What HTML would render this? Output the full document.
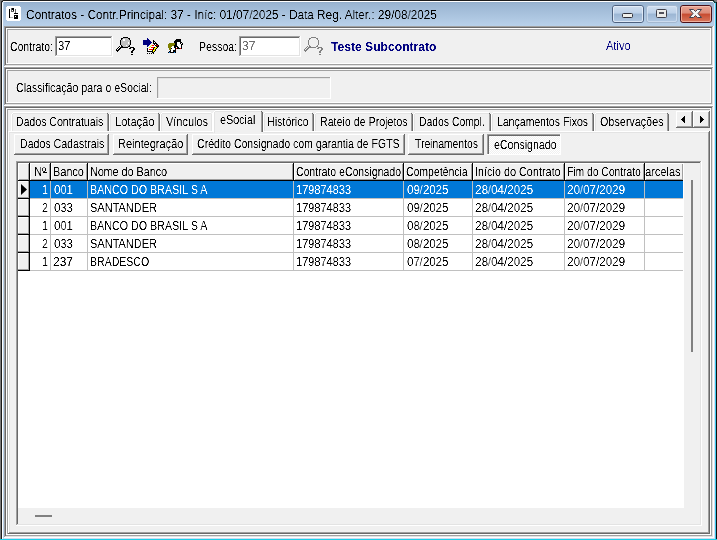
<!DOCTYPE html>
<html><head><meta charset="utf-8"><style>
html,body{margin:0;padding:0;width:717px;height:540px;overflow:hidden;background:#f0f0f0}
div{position:absolute}
.t{font-family:"Liberation Sans", sans-serif;white-space:nowrap;will-change:transform;filter:url(#crisp)}
</style></head><body>
<svg width="0" height="0" style="position:absolute"><filter id="crisp" x="-5%" y="-60%" width="110%" height="220%"><feComponentTransfer><feFuncA type="linear" slope="2.5" intercept="-0.7"/></feComponentTransfer></filter></svg>
<div style="left:0px;top:0px;width:717px;height:26px;background:linear-gradient(#99b4d1 0px, #99b4d1 3px, #b9d1ea 26px);"></div><div style="left:0px;top:0px;width:717px;height:1px;background:#1c1c1c;"></div><div style="left:2px;top:1px;width:712px;height:1px;background:#ffffff;"></div><div style="left:2px;top:2px;width:712px;height:1px;background:#93aecb;"></div><div style="left:0px;top:0px;width:1px;height:540px;background:#7a7a7a;"></div><div style="left:1px;top:1px;width:1px;height:539px;background:#1a1a1a;"></div><div style="left:2px;top:2px;width:1px;height:538px;background:#ffffff;"></div><div style="left:3px;top:2px;width:1px;height:538px;background:#b9d1ea;"></div><div style="left:714px;top:2px;width:1px;height:538px;background:#d6e0f2;"></div><div style="left:715px;top:1px;width:1px;height:539px;background:#3cc8ee;"></div><div style="left:716px;top:0px;width:1px;height:540px;background:#101010;"></div><div style="left:4px;top:538px;width:711px;height:1px;background:#d0daf0;"></div><div style="left:0px;top:539px;width:717px;height:1px;background:#1ad0e8;"></div><div style="left:0px;top:0px;width:1px;height:1px;background:#7a7a7a;"></div><div style="left:1px;top:0px;width:1px;height:1px;background:#7a7a7a;"></div><div style="left:2px;top:0px;width:1px;height:1px;background:#505050;"></div><div style="left:0px;top:1px;width:1px;height:1px;background:#7a7a7a;"></div><div style="left:1px;top:1px;width:1px;height:1px;background:#303030;"></div><div style="left:2px;top:1px;width:1px;height:1px;background:#1c1c1c;"></div><div style="left:1px;top:2px;width:1px;height:1px;background:#1c1c1c;"></div><div style="left:2px;top:2px;width:1px;height:1px;background:#d0d8e0;"></div><div style="left:714px;top:0px;width:1px;height:1px;background:#7a7a7a;"></div><div style="left:715px;top:0px;width:1px;height:1px;background:#7a7a7a;"></div><div style="left:716px;top:0px;width:1px;height:1px;background:#7a7a7a;"></div><div style="left:716px;top:1px;width:1px;height:1px;background:#7a7a7a;"></div><div style="left:713px;top:1px;width:1px;height:1px;background:#205050;"></div><div style="left:714px;top:1px;width:1px;height:1px;background:#205050;"></div><div style="left:715px;top:1px;width:1px;height:1px;background:#7a7a7a;"></div><div style="left:714px;top:2px;width:1px;height:1px;background:#103030;"></div><div style="left:715px;top:2px;width:1px;height:1px;background:#205050;"></div><div style="left:713px;top:2px;width:1px;height:1px;background:#c0f0f8;"></div><div style="left:4px;top:26px;width:710px;height:1px;background:#a0a0a0;"></div><div style="left:4px;top:26px;width:1px;height:41px;background:#a0a0a0;"></div><div style="left:4px;top:66px;width:710px;height:1px;background:#ffffff;"></div><div style="left:713px;top:26px;width:1px;height:41px;background:#ffffff;"></div><div style="left:5px;top:27px;width:708px;height:1px;background:#696969;"></div><div style="left:5px;top:27px;width:1px;height:39px;background:#696969;"></div><div style="left:5px;top:65px;width:708px;height:1px;background:#e3e3e3;"></div><div style="left:712px;top:27px;width:1px;height:39px;background:#e3e3e3;"></div><div style="left:6px;top:28px;width:706px;height:1px;background:#ffffff;"></div><div style="left:6px;top:28px;width:1px;height:37px;background:#ffffff;"></div><div style="left:6px;top:64px;width:706px;height:1px;background:#a0a0a0;"></div><div style="left:711px;top:28px;width:1px;height:37px;background:#a0a0a0;"></div><div style="left:7px;top:29px;width:704px;height:1px;background:#a0a0a0;"></div><div style="left:7px;top:29px;width:1px;height:35px;background:#a0a0a0;"></div><div style="left:7px;top:63px;width:704px;height:1px;background:#ffffff;"></div><div style="left:710px;top:29px;width:1px;height:35px;background:#ffffff;"></div><div style="left:4px;top:67px;width:710px;height:1px;background:#a0a0a0;"></div><div style="left:4px;top:67px;width:1px;height:39px;background:#a0a0a0;"></div><div style="left:4px;top:105px;width:710px;height:1px;background:#ffffff;"></div><div style="left:713px;top:67px;width:1px;height:39px;background:#ffffff;"></div><div style="left:5px;top:68px;width:708px;height:1px;background:#696969;"></div><div style="left:5px;top:68px;width:1px;height:37px;background:#696969;"></div><div style="left:5px;top:104px;width:708px;height:1px;background:#e3e3e3;"></div><div style="left:712px;top:68px;width:1px;height:37px;background:#e3e3e3;"></div><div style="left:6px;top:69px;width:706px;height:1px;background:#ffffff;"></div><div style="left:6px;top:69px;width:1px;height:35px;background:#ffffff;"></div><div style="left:6px;top:103px;width:706px;height:1px;background:#a0a0a0;"></div><div style="left:711px;top:69px;width:1px;height:35px;background:#a0a0a0;"></div><div style="left:7px;top:70px;width:704px;height:1px;background:#a0a0a0;"></div><div style="left:7px;top:70px;width:1px;height:33px;background:#a0a0a0;"></div><div style="left:7px;top:102px;width:704px;height:1px;background:#ffffff;"></div><div style="left:710px;top:70px;width:1px;height:33px;background:#ffffff;"></div><div style="left:4px;top:106px;width:710px;height:1px;background:#a0a0a0;"></div><div style="left:4px;top:106px;width:1px;height:432px;background:#a0a0a0;"></div><div style="left:4px;top:537px;width:710px;height:1px;background:#ffffff;"></div><div style="left:713px;top:106px;width:1px;height:432px;background:#ffffff;"></div><div style="left:5px;top:107px;width:708px;height:1px;background:#696969;"></div><div style="left:5px;top:107px;width:1px;height:430px;background:#696969;"></div><div style="left:5px;top:536px;width:708px;height:1px;background:#e3e3e3;"></div><div style="left:712px;top:107px;width:1px;height:430px;background:#e3e3e3;"></div><div style="left:6px;top:108px;width:706px;height:1px;background:#ffffff;"></div><div style="left:6px;top:108px;width:1px;height:428px;background:#ffffff;"></div><div style="left:6px;top:535px;width:706px;height:1px;background:#a0a0a0;"></div><div style="left:711px;top:108px;width:1px;height:428px;background:#a0a0a0;"></div><div style="left:7px;top:109px;width:704px;height:1px;background:#a0a0a0;"></div><div style="left:7px;top:109px;width:1px;height:426px;background:#a0a0a0;"></div><div style="left:7px;top:534px;width:704px;height:1px;background:#ffffff;"></div><div style="left:710px;top:109px;width:1px;height:426px;background:#ffffff;"></div><div class="t" style="left:26.02px;top:8.84px;font-size:12px;line-height:12px;color:#000;transform:scaleX(0.9808);transform-origin:0 0">Contratos - Contr.Principal: 37 - Iníc: 01/07/2025 - Data Reg. Alter.: 29/08/2025</div><div class="t" style="left:10.13px;top:40.84px;font-size:12px;line-height:12px;color:#000;transform:scaleX(0.8723);transform-origin:0 0">Contrato:</div><div class="t" style="left:199.12px;top:40.84px;font-size:12px;line-height:12px;color:#000;transform:scaleX(0.8780);transform-origin:0 0">Pessoa:</div><div class="t" style="left:331.00px;top:40.84px;font-size:12px;line-height:12px;color:#000080;font-weight:bold;transform:scaleX(1.0096);transform-origin:0 0">Teste Subcontrato</div><div class="t" style="left:606.00px;top:39.84px;font-size:12px;line-height:12px;color:#000080;transform:scaleX(0.9231);transform-origin:0 0">Ativo</div><div style="left:55px;top:36px;width:58px;height:21px;background:#ffffff;"></div><div style="left:55px;top:36px;width:58px;height:1px;background:#a0a0a0;"></div><div style="left:55px;top:36px;width:1px;height:21px;background:#a0a0a0;"></div><div style="left:56px;top:37px;width:56px;height:1px;background:#696969;"></div><div style="left:56px;top:37px;width:1px;height:19px;background:#696969;"></div><div style="left:55px;top:56px;width:58px;height:1px;background:#ffffff;"></div><div style="left:112px;top:36px;width:1px;height:21px;background:#ffffff;"></div><div style="left:56px;top:55px;width:56px;height:1px;background:#e3e3e3;"></div><div style="left:111px;top:37px;width:1px;height:19px;background:#e3e3e3;"></div><div class="t" style="left:58.08px;top:39.84px;font-size:12px;line-height:12px;color:#000;transform:scaleX(0.9167);transform-origin:0 0">37</div><div style="left:239px;top:36px;width:62px;height:21px;background:#ffffff;"></div><div style="left:239px;top:36px;width:62px;height:1px;background:#a0a0a0;"></div><div style="left:239px;top:36px;width:1px;height:21px;background:#a0a0a0;"></div><div style="left:240px;top:37px;width:60px;height:1px;background:#696969;"></div><div style="left:240px;top:37px;width:1px;height:19px;background:#696969;"></div><div style="left:239px;top:56px;width:62px;height:1px;background:#ffffff;"></div><div style="left:300px;top:36px;width:1px;height:21px;background:#ffffff;"></div><div style="left:240px;top:55px;width:60px;height:1px;background:#e3e3e3;"></div><div style="left:299px;top:37px;width:1px;height:19px;background:#e3e3e3;"></div><div class="t" style="left:242.00px;top:39.84px;font-size:12px;line-height:12px;color:#6d6d6d;transform:scaleX(1.0000);transform-origin:0 0">37</div><div class="t" style="left:16.12px;top:81.84px;font-size:12px;line-height:12px;color:#000;transform:scaleX(0.8816);transform-origin:0 0">Classificação para o eSocial:</div><div style="left:157px;top:77px;width:174px;height:1px;background:#a0a0a0;"></div><div style="left:157px;top:77px;width:1px;height:21px;background:#a0a0a0;"></div><div style="left:157px;top:98px;width:174px;height:1px;background:#ffffff;"></div><div style="left:330px;top:77px;width:1px;height:22px;background:#ffffff;"></div><div style="left:158px;top:78px;width:172px;height:1px;background:#e3e3e3;"></div><div style="left:158px;top:78px;width:1px;height:20px;background:#e3e3e3;"></div><div style="left:8px;top:131px;width:701px;height:1px;background:#ffffff;"></div><div style="left:8px;top:131px;width:1px;height:402px;background:#ffffff;"></div><div style="left:9px;top:132px;width:699px;height:1px;background:#e3e3e3;"></div><div style="left:9px;top:132px;width:1px;height:400px;background:#e3e3e3;"></div><div style="left:8px;top:533px;width:702px;height:1px;background:#696969;"></div><div style="left:709px;top:131px;width:1px;height:403px;background:#696969;"></div><div style="left:9px;top:532px;width:700px;height:1px;background:#a0a0a0;"></div><div style="left:708px;top:132px;width:1px;height:401px;background:#a0a0a0;"></div><div style="left:13px;top:112px;width:94px;height:1px;background:#ffffff;"></div><div style="left:12px;top:113px;width:1px;height:1px;background:#ffffff;"></div><div style="left:11px;top:114px;width:1px;height:17px;background:#ffffff;"></div><div style="left:13px;top:113px;width:94px;height:1px;background:#e3e3e3;"></div><div style="left:12px;top:114px;width:1px;height:17px;background:#e3e3e3;"></div><div style="left:107px;top:114px;width:1px;height:17px;background:#a0a0a0;"></div><div style="left:107px;top:113px;width:1px;height:1px;background:#696969;"></div><div style="left:108px;top:114px;width:1px;height:17px;background:#696969;"></div><div class="t" style="left:16.12px;top:115.84px;font-size:12px;line-height:12px;color:#000;transform:scaleX(0.8776);transform-origin:0 0">Dados Contratuais</div><div style="left:111px;top:112px;width:47px;height:1px;background:#ffffff;"></div><div style="left:110px;top:113px;width:1px;height:1px;background:#ffffff;"></div><div style="left:109px;top:114px;width:1px;height:17px;background:#ffffff;"></div><div style="left:111px;top:113px;width:47px;height:1px;background:#e3e3e3;"></div><div style="left:110px;top:114px;width:1px;height:17px;background:#e3e3e3;"></div><div style="left:158px;top:114px;width:1px;height:17px;background:#a0a0a0;"></div><div style="left:158px;top:113px;width:1px;height:1px;background:#696969;"></div><div style="left:159px;top:114px;width:1px;height:17px;background:#696969;"></div><div class="t" style="left:115.07px;top:115.84px;font-size:12px;line-height:12px;color:#000;transform:scaleX(0.9268);transform-origin:0 0">Lotação</div><div style="left:162px;top:112px;width:49px;height:1px;background:#ffffff;"></div><div style="left:161px;top:113px;width:1px;height:1px;background:#ffffff;"></div><div style="left:160px;top:114px;width:1px;height:17px;background:#ffffff;"></div><div style="left:162px;top:113px;width:49px;height:1px;background:#e3e3e3;"></div><div style="left:161px;top:114px;width:1px;height:17px;background:#e3e3e3;"></div><div style="left:212px;top:113px;width:1px;height:18px;background:#ffffff;"></div><div style="left:211px;top:114px;width:1px;height:17px;background:#e3e3e3;"></div><div class="t" style="left:166.00px;top:115.84px;font-size:12px;line-height:12px;color:#000;transform:scaleX(0.9130);transform-origin:0 0">Vínculos</div><div style="left:265px;top:112px;width:47px;height:1px;background:#ffffff;"></div><div style="left:264px;top:113px;width:1px;height:1px;background:#ffffff;"></div><div style="left:263px;top:114px;width:1px;height:17px;background:#ffffff;"></div><div style="left:265px;top:113px;width:47px;height:1px;background:#e3e3e3;"></div><div style="left:264px;top:114px;width:1px;height:17px;background:#e3e3e3;"></div><div style="left:312px;top:114px;width:1px;height:17px;background:#a0a0a0;"></div><div style="left:312px;top:113px;width:1px;height:1px;background:#696969;"></div><div style="left:313px;top:114px;width:1px;height:17px;background:#696969;"></div><div class="t" style="left:267.11px;top:115.84px;font-size:12px;line-height:12px;color:#000;transform:scaleX(0.8889);transform-origin:0 0">Histórico</div><div style="left:316px;top:112px;width:95px;height:1px;background:#ffffff;"></div><div style="left:315px;top:113px;width:1px;height:1px;background:#ffffff;"></div><div style="left:314px;top:114px;width:1px;height:17px;background:#ffffff;"></div><div style="left:316px;top:113px;width:95px;height:1px;background:#e3e3e3;"></div><div style="left:315px;top:114px;width:1px;height:17px;background:#e3e3e3;"></div><div style="left:411px;top:114px;width:1px;height:17px;background:#a0a0a0;"></div><div style="left:411px;top:113px;width:1px;height:1px;background:#696969;"></div><div style="left:412px;top:114px;width:1px;height:17px;background:#696969;"></div><div class="t" style="left:320.11px;top:115.84px;font-size:12px;line-height:12px;color:#000;transform:scaleX(0.8866);transform-origin:0 0">Rateio de Projetos</div><div style="left:415px;top:112px;width:74px;height:1px;background:#ffffff;"></div><div style="left:414px;top:113px;width:1px;height:1px;background:#ffffff;"></div><div style="left:413px;top:114px;width:1px;height:17px;background:#ffffff;"></div><div style="left:415px;top:113px;width:74px;height:1px;background:#e3e3e3;"></div><div style="left:414px;top:114px;width:1px;height:17px;background:#e3e3e3;"></div><div style="left:489px;top:114px;width:1px;height:17px;background:#a0a0a0;"></div><div style="left:489px;top:113px;width:1px;height:1px;background:#696969;"></div><div style="left:490px;top:114px;width:1px;height:17px;background:#696969;"></div><div class="t" style="left:419.14px;top:115.84px;font-size:12px;line-height:12px;color:#000;transform:scaleX(0.8649);transform-origin:0 0">Dados Compl.</div><div style="left:493px;top:112px;width:99px;height:1px;background:#ffffff;"></div><div style="left:492px;top:113px;width:1px;height:1px;background:#ffffff;"></div><div style="left:491px;top:114px;width:1px;height:17px;background:#ffffff;"></div><div style="left:493px;top:113px;width:99px;height:1px;background:#e3e3e3;"></div><div style="left:492px;top:114px;width:1px;height:17px;background:#e3e3e3;"></div><div style="left:592px;top:114px;width:1px;height:17px;background:#a0a0a0;"></div><div style="left:592px;top:113px;width:1px;height:1px;background:#696969;"></div><div style="left:593px;top:114px;width:1px;height:17px;background:#696969;"></div><div class="t" style="left:497.13px;top:115.84px;font-size:12px;line-height:12px;color:#000;transform:scaleX(0.8738);transform-origin:0 0">Lançamentos Fixos</div><div style="left:596px;top:112px;width:71px;height:1px;background:#ffffff;"></div><div style="left:595px;top:113px;width:1px;height:1px;background:#ffffff;"></div><div style="left:594px;top:114px;width:1px;height:17px;background:#ffffff;"></div><div style="left:596px;top:113px;width:71px;height:1px;background:#e3e3e3;"></div><div style="left:595px;top:114px;width:1px;height:17px;background:#e3e3e3;"></div><div style="left:667px;top:114px;width:1px;height:17px;background:#a0a0a0;"></div><div style="left:667px;top:113px;width:1px;height:1px;background:#696969;"></div><div style="left:668px;top:114px;width:1px;height:17px;background:#696969;"></div><div class="t" style="left:600.10px;top:115.84px;font-size:12px;line-height:12px;color:#000;transform:scaleX(0.8986);transform-origin:0 0">Observações</div><div style="left:213px;top:110px;width:50px;height:23px;background:#f0f0f0;"></div><div style="left:215px;top:110px;width:46px;height:1px;background:#ffffff;"></div><div style="left:214px;top:111px;width:1px;height:1px;background:#ffffff;"></div><div style="left:213px;top:112px;width:1px;height:20px;background:#ffffff;"></div><div style="left:215px;top:111px;width:46px;height:1px;background:#e3e3e3;"></div><div style="left:214px;top:112px;width:1px;height:21px;background:#e3e3e3;"></div><div style="left:261px;top:112px;width:1px;height:20px;background:#a0a0a0;"></div><div style="left:261px;top:111px;width:1px;height:1px;background:#696969;"></div><div style="left:262px;top:112px;width:1px;height:20px;background:#696969;"></div><div class="t" style="left:220.11px;top:113.84px;font-size:12px;line-height:12px;color:#000;transform:scaleX(0.8947);transform-origin:0 0">eSocial</div><div style="left:676px;top:111px;width:17px;height:17px;background:#f0f0f0;"></div><div style="left:676px;top:111px;width:16px;height:1px;background:#ffffff;"></div><div style="left:676px;top:111px;width:1px;height:16px;background:#ffffff;"></div><div style="left:676px;top:127px;width:17px;height:1px;background:#696969;"></div><div style="left:692px;top:111px;width:1px;height:17px;background:#696969;"></div><div style="left:677px;top:126px;width:15px;height:1px;background:#a0a0a0;"></div><div style="left:691px;top:112px;width:1px;height:15px;background:#a0a0a0;"></div><div style="left:693px;top:111px;width:17px;height:17px;background:#f0f0f0;"></div><div style="left:693px;top:111px;width:16px;height:1px;background:#ffffff;"></div><div style="left:693px;top:111px;width:1px;height:16px;background:#ffffff;"></div><div style="left:693px;top:127px;width:17px;height:1px;background:#696969;"></div><div style="left:709px;top:111px;width:1px;height:17px;background:#696969;"></div><div style="left:694px;top:126px;width:15px;height:1px;background:#a0a0a0;"></div><div style="left:708px;top:112px;width:1px;height:15px;background:#a0a0a0;"></div><div style="left:684px;top:116px;width:1px;height:7px;background:#000;"></div><div style="left:700px;top:116px;width:1px;height:7px;background:#000;"></div><div style="left:683px;top:117px;width:1px;height:5px;background:#000;"></div><div style="left:701px;top:117px;width:1px;height:5px;background:#000;"></div><div style="left:682px;top:118px;width:1px;height:3px;background:#000;"></div><div style="left:702px;top:118px;width:1px;height:3px;background:#000;"></div><div style="left:681px;top:119px;width:1px;height:1px;background:#000;"></div><div style="left:703px;top:119px;width:1px;height:1px;background:#000;"></div><div style="left:14px;top:134px;width:95px;height:21px;background:#f0f0f0;"></div><div style="left:14px;top:134px;width:94px;height:1px;background:#ffffff;"></div><div style="left:14px;top:134px;width:1px;height:20px;background:#ffffff;"></div><div style="left:14px;top:154px;width:95px;height:1px;background:#696969;"></div><div style="left:108px;top:134px;width:1px;height:21px;background:#696969;"></div><div style="left:15px;top:153px;width:93px;height:1px;background:#a0a0a0;"></div><div style="left:107px;top:135px;width:1px;height:19px;background:#a0a0a0;"></div><div class="t" style="left:20.12px;top:137.84px;font-size:12px;line-height:12px;color:#000;transform:scaleX(0.8830);transform-origin:0 0">Dados Cadastrais</div><div style="left:113px;top:134px;width:75px;height:21px;background:#f0f0f0;"></div><div style="left:113px;top:134px;width:74px;height:1px;background:#ffffff;"></div><div style="left:113px;top:134px;width:1px;height:20px;background:#ffffff;"></div><div style="left:113px;top:154px;width:75px;height:1px;background:#696969;"></div><div style="left:187px;top:134px;width:1px;height:21px;background:#696969;"></div><div style="left:114px;top:153px;width:73px;height:1px;background:#a0a0a0;"></div><div style="left:186px;top:135px;width:1px;height:19px;background:#a0a0a0;"></div><div class="t" style="left:118.09px;top:137.84px;font-size:12px;line-height:12px;color:#000;transform:scaleX(0.9143);transform-origin:0 0">Reintegração</div><div style="left:192px;top:134px;width:213px;height:21px;background:#f0f0f0;"></div><div style="left:192px;top:134px;width:212px;height:1px;background:#ffffff;"></div><div style="left:192px;top:134px;width:1px;height:20px;background:#ffffff;"></div><div style="left:192px;top:154px;width:213px;height:1px;background:#696969;"></div><div style="left:404px;top:134px;width:1px;height:21px;background:#696969;"></div><div style="left:193px;top:153px;width:211px;height:1px;background:#a0a0a0;"></div><div style="left:403px;top:135px;width:1px;height:19px;background:#a0a0a0;"></div><div class="t" style="left:197.12px;top:137.84px;font-size:12px;line-height:12px;color:#000;transform:scaleX(0.8777);transform-origin:0 0">Crédito Consignado com garantia de FGTS</div><div style="left:408px;top:134px;width:76px;height:21px;background:#f0f0f0;"></div><div style="left:408px;top:134px;width:75px;height:1px;background:#ffffff;"></div><div style="left:408px;top:134px;width:1px;height:20px;background:#ffffff;"></div><div style="left:408px;top:154px;width:76px;height:1px;background:#696969;"></div><div style="left:483px;top:134px;width:1px;height:21px;background:#696969;"></div><div style="left:409px;top:153px;width:74px;height:1px;background:#a0a0a0;"></div><div style="left:482px;top:135px;width:1px;height:19px;background:#a0a0a0;"></div><div class="t" style="left:415.00px;top:137.84px;font-size:12px;line-height:12px;color:#000;transform:scaleX(0.8630);transform-origin:0 0">Treinamentos</div><div style="left:487px;top:134px;width:74px;height:21px;background:repeating-conic-gradient(#ffffff 0 25%, #f0f0f0 0 50%) 0 0/2px 2px;"></div><div style="left:487px;top:134px;width:74px;height:1px;background:#a0a0a0;"></div><div style="left:487px;top:134px;width:1px;height:21px;background:#a0a0a0;"></div><div style="left:488px;top:135px;width:72px;height:1px;background:#696969;"></div><div style="left:488px;top:135px;width:1px;height:19px;background:#696969;"></div><div style="left:487px;top:154px;width:74px;height:1px;background:#ffffff;"></div><div style="left:560px;top:134px;width:1px;height:21px;background:#ffffff;"></div><div class="t" style="left:494.12px;top:138.84px;font-size:12px;line-height:12px;color:#000;transform:scaleX(0.8841);transform-origin:0 0">eConsignado</div><div style="left:16px;top:161px;width:686px;height:1px;background:#a0a0a0;"></div><div style="left:16px;top:161px;width:1px;height:365px;background:#a0a0a0;"></div><div style="left:17px;top:162px;width:684px;height:1px;background:#696969;"></div><div style="left:17px;top:162px;width:1px;height:363px;background:#696969;"></div><div style="left:16px;top:525px;width:686px;height:1px;background:#ffffff;"></div><div style="left:701px;top:161px;width:1px;height:365px;background:#ffffff;"></div><div style="left:17px;top:524px;width:684px;height:1px;background:#e3e3e3;"></div><div style="left:700px;top:162px;width:1px;height:363px;background:#e3e3e3;"></div><div style="left:18px;top:163px;width:666px;height:345px;background:#ffffff;"></div><div style="left:18px;top:163px;width:665px;height:17px;background:#f0f0f0;"></div><div style="left:18px;top:180px;width:665px;height:1px;background:#000;"></div><div style="left:18px;top:163px;width:11px;height:1px;background:#ffffff;"></div><div style="left:18px;top:163px;width:1px;height:17px;background:#ffffff;"></div><div style="left:19px;top:179px;width:10px;height:1px;background:#a0a0a0;"></div><div style="left:28px;top:164px;width:1px;height:16px;background:#a0a0a0;"></div><div style="left:29px;top:163px;width:1px;height:18px;background:#000;"></div><div style="left:30px;top:163px;width:20px;height:1px;background:#ffffff;"></div><div style="left:30px;top:163px;width:1px;height:17px;background:#ffffff;"></div><div style="left:31px;top:179px;width:19px;height:1px;background:#a0a0a0;"></div><div style="left:49px;top:164px;width:1px;height:16px;background:#a0a0a0;"></div><div style="left:50px;top:163px;width:1px;height:18px;background:#000;"></div><div style="left:51px;top:163px;width:36px;height:1px;background:#ffffff;"></div><div style="left:51px;top:163px;width:1px;height:17px;background:#ffffff;"></div><div style="left:52px;top:179px;width:35px;height:1px;background:#a0a0a0;"></div><div style="left:86px;top:164px;width:1px;height:16px;background:#a0a0a0;"></div><div style="left:87px;top:163px;width:1px;height:18px;background:#000;"></div><div style="left:88px;top:163px;width:205px;height:1px;background:#ffffff;"></div><div style="left:88px;top:163px;width:1px;height:17px;background:#ffffff;"></div><div style="left:89px;top:179px;width:204px;height:1px;background:#a0a0a0;"></div><div style="left:292px;top:164px;width:1px;height:16px;background:#a0a0a0;"></div><div style="left:293px;top:163px;width:1px;height:18px;background:#000;"></div><div style="left:294px;top:163px;width:109px;height:1px;background:#ffffff;"></div><div style="left:294px;top:163px;width:1px;height:17px;background:#ffffff;"></div><div style="left:295px;top:179px;width:108px;height:1px;background:#a0a0a0;"></div><div style="left:402px;top:164px;width:1px;height:16px;background:#a0a0a0;"></div><div style="left:403px;top:163px;width:1px;height:18px;background:#000;"></div><div style="left:404px;top:163px;width:68px;height:1px;background:#ffffff;"></div><div style="left:404px;top:163px;width:1px;height:17px;background:#ffffff;"></div><div style="left:405px;top:179px;width:67px;height:1px;background:#a0a0a0;"></div><div style="left:471px;top:164px;width:1px;height:16px;background:#a0a0a0;"></div><div style="left:472px;top:163px;width:1px;height:18px;background:#000;"></div><div style="left:473px;top:163px;width:91px;height:1px;background:#ffffff;"></div><div style="left:473px;top:163px;width:1px;height:17px;background:#ffffff;"></div><div style="left:474px;top:179px;width:90px;height:1px;background:#a0a0a0;"></div><div style="left:563px;top:164px;width:1px;height:16px;background:#a0a0a0;"></div><div style="left:564px;top:163px;width:1px;height:18px;background:#000;"></div><div style="left:565px;top:163px;width:79px;height:1px;background:#ffffff;"></div><div style="left:565px;top:163px;width:1px;height:17px;background:#ffffff;"></div><div style="left:566px;top:179px;width:78px;height:1px;background:#a0a0a0;"></div><div style="left:643px;top:164px;width:1px;height:16px;background:#a0a0a0;"></div><div style="left:644px;top:163px;width:1px;height:18px;background:#000;"></div><div style="left:645px;top:163px;width:38px;height:1px;background:#ffffff;"></div><div style="left:645px;top:163px;width:1px;height:17px;background:#ffffff;"></div><div style="left:646px;top:179px;width:37px;height:1px;background:#a0a0a0;"></div><div style="left:682px;top:164px;width:1px;height:16px;background:#a0a0a0;"></div><div style="left:683px;top:163px;width:1px;height:1px;background:#ffffff;"></div><div class="t" style="left:34.08px;top:165.84px;font-size:12px;line-height:12px;color:#000;transform:scaleX(0.9167);transform-origin:0 0">Nº</div><div class="t" style="left:53.09px;top:165.84px;font-size:12px;line-height:12px;color:#000;transform:scaleX(0.9091);transform-origin:0 0">Banco</div><div class="t" style="left:90.11px;top:165.84px;font-size:12px;line-height:12px;color:#000;transform:scaleX(0.8941);transform-origin:0 0">Nome do Banco</div><div class="t" style="left:296.13px;top:165.84px;font-size:12px;line-height:12px;color:#000;transform:scaleX(0.8739);transform-origin:0 0">Contrato eConsignado</div><div class="t" style="left:406.13px;top:165.84px;font-size:12px;line-height:12px;color:#000;transform:scaleX(0.8714);transform-origin:0 0">Competência</div><div class="t" style="left:475.10px;top:165.84px;font-size:12px;line-height:12px;color:#000;transform:scaleX(0.9032);transform-origin:0 0">Início do Contrato</div><div class="t" style="left:567.14px;top:165.84px;font-size:12px;line-height:12px;color:#000;transform:scaleX(0.8588);transform-origin:0 0">Fim do Contrato</div><div class="t" style="left:645.08px;top:165.84px;font-size:12px;line-height:12px;color:#000;transform:scaleX(0.9189);transform-origin:0 0">arcelas</div><div style="left:43px;top:172px;width:4px;height:1px;background:#000;"></div><div style="left:18px;top:181px;width:11px;height:17px;background:#f0f0f0;"></div><div style="left:18px;top:181px;width:10px;height:1px;background:#ffffff;"></div><div style="left:18px;top:181px;width:1px;height:16px;background:#ffffff;"></div><div style="left:28px;top:181px;width:1px;height:17px;background:#a0a0a0;"></div><div style="left:18px;top:197px;width:11px;height:1px;background:#a0a0a0;"></div><div style="left:18px;top:198px;width:12px;height:1px;background:#000;"></div><div style="left:29px;top:181px;width:1px;height:18px;background:#000;"></div><div style="left:30px;top:181px;width:653px;height:17px;background:#0078d7;"></div><div style="left:30px;top:198px;width:653px;height:1px;background:#c0c0c0;"></div><div style="left:50px;top:181px;width:1px;height:18px;background:#c0c0c0;"></div><div style="left:87px;top:181px;width:1px;height:18px;background:#c0c0c0;"></div><div style="left:293px;top:181px;width:1px;height:18px;background:#c0c0c0;"></div><div style="left:403px;top:181px;width:1px;height:18px;background:#c0c0c0;"></div><div style="left:472px;top:181px;width:1px;height:18px;background:#c0c0c0;"></div><div style="left:564px;top:181px;width:1px;height:18px;background:#c0c0c0;"></div><div style="left:644px;top:181px;width:1px;height:18px;background:#c0c0c0;"></div><div class="t" style="left:41.72px;top:183.84px;font-size:12px;line-height:12px;color:#fff;transform:scaleX(0.8800);transform-origin:0 0">1</div><div class="t" style="left:54.00px;top:183.84px;font-size:12px;line-height:12px;color:#fff;transform:scaleX(0.9474);transform-origin:0 0">001</div><div class="t" style="left:90.11px;top:183.84px;font-size:12px;line-height:12px;color:#fff;transform:scaleX(0.8923);transform-origin:0 0">BANCO DO BRASIL S A</div><div class="t" style="left:296.08px;top:183.84px;font-size:12px;line-height:12px;color:#fff;transform:scaleX(0.9153);transform-origin:0 0">179874833</div><div class="t" style="left:407.00px;top:183.84px;font-size:12px;line-height:12px;color:#fff;transform:scaleX(0.9535);transform-origin:0 0">09/2025</div><div class="t" style="left:475.03px;top:183.84px;font-size:12px;line-height:12px;color:#fff;transform:scaleX(0.9661);transform-origin:0 0">28/04/2025</div><div class="t" style="left:567.03px;top:183.84px;font-size:12px;line-height:12px;color:#fff;transform:scaleX(0.9661);transform-origin:0 0">20/07/2029</div><div style="left:18px;top:199px;width:11px;height:17px;background:#f0f0f0;"></div><div style="left:18px;top:199px;width:10px;height:1px;background:#ffffff;"></div><div style="left:18px;top:199px;width:1px;height:16px;background:#ffffff;"></div><div style="left:28px;top:199px;width:1px;height:17px;background:#a0a0a0;"></div><div style="left:18px;top:215px;width:11px;height:1px;background:#a0a0a0;"></div><div style="left:18px;top:216px;width:12px;height:1px;background:#000;"></div><div style="left:29px;top:199px;width:1px;height:18px;background:#000;"></div><div style="left:30px;top:216px;width:653px;height:1px;background:#c0c0c0;"></div><div style="left:50px;top:199px;width:1px;height:18px;background:#c0c0c0;"></div><div style="left:87px;top:199px;width:1px;height:18px;background:#c0c0c0;"></div><div style="left:293px;top:199px;width:1px;height:18px;background:#c0c0c0;"></div><div style="left:403px;top:199px;width:1px;height:18px;background:#c0c0c0;"></div><div style="left:472px;top:199px;width:1px;height:18px;background:#c0c0c0;"></div><div style="left:564px;top:199px;width:1px;height:18px;background:#c0c0c0;"></div><div style="left:644px;top:199px;width:1px;height:18px;background:#c0c0c0;"></div><div class="t" style="left:41.72px;top:201.84px;font-size:12px;line-height:12px;color:#000;transform:scaleX(0.8800);transform-origin:0 0">2</div><div class="t" style="left:54.00px;top:201.84px;font-size:12px;line-height:12px;color:#000;transform:scaleX(0.9474);transform-origin:0 0">033</div><div class="t" style="left:90.08px;top:201.84px;font-size:12px;line-height:12px;color:#000;transform:scaleX(0.9155);transform-origin:0 0">SANTANDER</div><div class="t" style="left:296.08px;top:201.84px;font-size:12px;line-height:12px;color:#000;transform:scaleX(0.9153);transform-origin:0 0">179874833</div><div class="t" style="left:407.00px;top:201.84px;font-size:12px;line-height:12px;color:#000;transform:scaleX(0.9535);transform-origin:0 0">09/2025</div><div class="t" style="left:475.03px;top:201.84px;font-size:12px;line-height:12px;color:#000;transform:scaleX(0.9661);transform-origin:0 0">28/04/2025</div><div class="t" style="left:567.03px;top:201.84px;font-size:12px;line-height:12px;color:#000;transform:scaleX(0.9661);transform-origin:0 0">20/07/2029</div><div style="left:18px;top:217px;width:11px;height:17px;background:#f0f0f0;"></div><div style="left:18px;top:217px;width:10px;height:1px;background:#ffffff;"></div><div style="left:18px;top:217px;width:1px;height:16px;background:#ffffff;"></div><div style="left:28px;top:217px;width:1px;height:17px;background:#a0a0a0;"></div><div style="left:18px;top:233px;width:11px;height:1px;background:#a0a0a0;"></div><div style="left:18px;top:234px;width:12px;height:1px;background:#000;"></div><div style="left:29px;top:217px;width:1px;height:18px;background:#000;"></div><div style="left:30px;top:234px;width:653px;height:1px;background:#c0c0c0;"></div><div style="left:50px;top:217px;width:1px;height:18px;background:#c0c0c0;"></div><div style="left:87px;top:217px;width:1px;height:18px;background:#c0c0c0;"></div><div style="left:293px;top:217px;width:1px;height:18px;background:#c0c0c0;"></div><div style="left:403px;top:217px;width:1px;height:18px;background:#c0c0c0;"></div><div style="left:472px;top:217px;width:1px;height:18px;background:#c0c0c0;"></div><div style="left:564px;top:217px;width:1px;height:18px;background:#c0c0c0;"></div><div style="left:644px;top:217px;width:1px;height:18px;background:#c0c0c0;"></div><div class="t" style="left:41.72px;top:219.84px;font-size:12px;line-height:12px;color:#000;transform:scaleX(0.8800);transform-origin:0 0">1</div><div class="t" style="left:54.00px;top:219.84px;font-size:12px;line-height:12px;color:#000;transform:scaleX(0.9474);transform-origin:0 0">001</div><div class="t" style="left:90.11px;top:219.84px;font-size:12px;line-height:12px;color:#000;transform:scaleX(0.8923);transform-origin:0 0">BANCO DO BRASIL S A</div><div class="t" style="left:296.08px;top:219.84px;font-size:12px;line-height:12px;color:#000;transform:scaleX(0.9153);transform-origin:0 0">179874833</div><div class="t" style="left:407.00px;top:219.84px;font-size:12px;line-height:12px;color:#000;transform:scaleX(0.9535);transform-origin:0 0">08/2025</div><div class="t" style="left:475.03px;top:219.84px;font-size:12px;line-height:12px;color:#000;transform:scaleX(0.9661);transform-origin:0 0">28/04/2025</div><div class="t" style="left:567.03px;top:219.84px;font-size:12px;line-height:12px;color:#000;transform:scaleX(0.9661);transform-origin:0 0">20/07/2029</div><div style="left:18px;top:235px;width:11px;height:17px;background:#f0f0f0;"></div><div style="left:18px;top:235px;width:10px;height:1px;background:#ffffff;"></div><div style="left:18px;top:235px;width:1px;height:16px;background:#ffffff;"></div><div style="left:28px;top:235px;width:1px;height:17px;background:#a0a0a0;"></div><div style="left:18px;top:251px;width:11px;height:1px;background:#a0a0a0;"></div><div style="left:18px;top:252px;width:12px;height:1px;background:#000;"></div><div style="left:29px;top:235px;width:1px;height:18px;background:#000;"></div><div style="left:30px;top:252px;width:653px;height:1px;background:#c0c0c0;"></div><div style="left:50px;top:235px;width:1px;height:18px;background:#c0c0c0;"></div><div style="left:87px;top:235px;width:1px;height:18px;background:#c0c0c0;"></div><div style="left:293px;top:235px;width:1px;height:18px;background:#c0c0c0;"></div><div style="left:403px;top:235px;width:1px;height:18px;background:#c0c0c0;"></div><div style="left:472px;top:235px;width:1px;height:18px;background:#c0c0c0;"></div><div style="left:564px;top:235px;width:1px;height:18px;background:#c0c0c0;"></div><div style="left:644px;top:235px;width:1px;height:18px;background:#c0c0c0;"></div><div class="t" style="left:41.72px;top:237.84px;font-size:12px;line-height:12px;color:#000;transform:scaleX(0.8800);transform-origin:0 0">2</div><div class="t" style="left:54.00px;top:237.84px;font-size:12px;line-height:12px;color:#000;transform:scaleX(0.9474);transform-origin:0 0">033</div><div class="t" style="left:90.08px;top:237.84px;font-size:12px;line-height:12px;color:#000;transform:scaleX(0.9155);transform-origin:0 0">SANTANDER</div><div class="t" style="left:296.08px;top:237.84px;font-size:12px;line-height:12px;color:#000;transform:scaleX(0.9153);transform-origin:0 0">179874833</div><div class="t" style="left:407.00px;top:237.84px;font-size:12px;line-height:12px;color:#000;transform:scaleX(0.9535);transform-origin:0 0">08/2025</div><div class="t" style="left:475.03px;top:237.84px;font-size:12px;line-height:12px;color:#000;transform:scaleX(0.9661);transform-origin:0 0">28/04/2025</div><div class="t" style="left:567.03px;top:237.84px;font-size:12px;line-height:12px;color:#000;transform:scaleX(0.9661);transform-origin:0 0">20/07/2029</div><div style="left:18px;top:253px;width:11px;height:17px;background:#f0f0f0;"></div><div style="left:18px;top:253px;width:10px;height:1px;background:#ffffff;"></div><div style="left:18px;top:253px;width:1px;height:16px;background:#ffffff;"></div><div style="left:28px;top:253px;width:1px;height:17px;background:#a0a0a0;"></div><div style="left:18px;top:269px;width:11px;height:1px;background:#a0a0a0;"></div><div style="left:18px;top:270px;width:12px;height:1px;background:#000;"></div><div style="left:29px;top:253px;width:1px;height:18px;background:#000;"></div><div style="left:30px;top:270px;width:653px;height:1px;background:#c0c0c0;"></div><div style="left:50px;top:253px;width:1px;height:18px;background:#c0c0c0;"></div><div style="left:87px;top:253px;width:1px;height:18px;background:#c0c0c0;"></div><div style="left:293px;top:253px;width:1px;height:18px;background:#c0c0c0;"></div><div style="left:403px;top:253px;width:1px;height:18px;background:#c0c0c0;"></div><div style="left:472px;top:253px;width:1px;height:18px;background:#c0c0c0;"></div><div style="left:564px;top:253px;width:1px;height:18px;background:#c0c0c0;"></div><div style="left:644px;top:253px;width:1px;height:18px;background:#c0c0c0;"></div><div class="t" style="left:41.72px;top:255.84px;font-size:12px;line-height:12px;color:#000;transform:scaleX(0.8800);transform-origin:0 0">1</div><div class="t" style="left:53.00px;top:255.84px;font-size:12px;line-height:12px;color:#000;transform:scaleX(1.0000);transform-origin:0 0">237</div><div class="t" style="left:90.12px;top:255.84px;font-size:12px;line-height:12px;color:#000;transform:scaleX(0.8788);transform-origin:0 0">BRADESCO</div><div class="t" style="left:296.08px;top:255.84px;font-size:12px;line-height:12px;color:#000;transform:scaleX(0.9153);transform-origin:0 0">179874833</div><div class="t" style="left:407.00px;top:255.84px;font-size:12px;line-height:12px;color:#000;transform:scaleX(0.9535);transform-origin:0 0">07/2025</div><div class="t" style="left:475.03px;top:255.84px;font-size:12px;line-height:12px;color:#000;transform:scaleX(0.9661);transform-origin:0 0">28/04/2025</div><div class="t" style="left:567.03px;top:255.84px;font-size:12px;line-height:12px;color:#000;transform:scaleX(0.9661);transform-origin:0 0">20/07/2029</div><svg style="position:absolute;left:0;top:0" width="717" height="540"><polygon points="21,184 21,195 27,189.5" fill="#000"/></svg><div style="left:691px;top:180px;width:2px;height:172px;background:#808080;"></div><div style="left:35px;top:515px;width:17px;height:2px;background:#808080;"></div><svg style="position:absolute;left:0;top:0" width="717" height="540">
 <g shape-rendering="auto">
 <rect x="612.5" y="5.5" width="31" height="17" rx="2.5" fill="url(#gmin)" stroke="#4e6280"/>
 <rect x="613.5" y="6.5" width="29" height="15" rx="1.5" fill="none" stroke="#e8f0fa" stroke-opacity="0.8"/>
 <rect x="622.5" y="13.5" width="10" height="4" rx="1" fill="#f0f0ec" stroke="#30303a"/>
 <rect x="646.5" y="5.5" width="31" height="17" rx="2.5" fill="url(#gmin)" stroke="#a4b8d0"/>
 <rect x="647.5" y="6.5" width="29" height="15" rx="1.5" fill="none" stroke="#e0eaf6" stroke-opacity="0.6"/>
 <rect x="656.5" y="9.5" width="10" height="8" rx="1" fill="#ececea" stroke="#40404a"/>
 <rect x="659" y="12" width="5" height="2" fill="#50505a"/>
 <rect x="680.5" y="5.5" width="31" height="17" rx="2.5" fill="url(#gcls)" stroke="#4a1018"/>
 <rect x="681.5" y="6.5" width="29" height="15" rx="1.5" fill="none" stroke="#f8c8b8" stroke-opacity="0.7"/>
 <path d="M689.5,9.5 L693.5,9.5 L695.5,11.5 L697.5,9.5 L701.5,9.5 L698,13.5 L701.5,17.5 L697.5,17.5 L695.5,15.5 L693.5,17.5 L689.5,17.5 L693,13.5 Z" fill="#f4f4f4" stroke="#40404e" stroke-width="1"/>
 </g>
 <defs>
  <linearGradient id="gmin" x1="0" y1="0" x2="0" y2="1">
   <stop offset="0" stop-color="#d2e0f0"/><stop offset="0.45" stop-color="#bcd0e8"/><stop offset="0.5" stop-color="#9bb5d3"/><stop offset="1" stop-color="#b4cae4"/>
  </linearGradient>
  <linearGradient id="gcls" x1="0" y1="0" x2="0" y2="1">
   <stop offset="0" stop-color="#eaa898"/><stop offset="0.45" stop-color="#dc8a78"/><stop offset="0.5" stop-color="#c74a30"/><stop offset="1" stop-color="#d87a60"/>
  </linearGradient>
 </defs>
</svg>
<svg style="position:absolute;left:0;top:0" width="717" height="540" shape-rendering="crispEdges">
<rect x="147" y="38" width="1" height="1" fill="#000080"/>
<rect x="147" y="39" width="2" height="1" fill="#000080"/>
<rect x="143" y="40" width="7" height="1" fill="#000080"/>
<rect x="153" y="40" width="1" height="1" fill="#000000"/>
<rect x="143" y="41" width="8" height="1" fill="#000080"/>
<rect x="153" y="41" width="2" height="1" fill="#000000"/>
<rect x="143" y="42" width="9" height="1" fill="#000080"/>
<rect x="153" y="42" width="1" height="1" fill="#000000"/>
<rect x="154" y="42" width="1" height="1" fill="#ffffff"/>
<rect x="155" y="42" width="1" height="1" fill="#000000"/>
<rect x="143" y="43" width="8" height="1" fill="#000080"/>
<rect x="153" y="43" width="4" height="1" fill="#000000"/>
<rect x="143" y="44" width="7" height="1" fill="#000080"/>
<rect x="154" y="44" width="1" height="1" fill="#000000"/>
<rect x="155" y="44" width="1" height="1" fill="#ffffff"/>
<rect x="156" y="44" width="2" height="1" fill="#000000"/>
<rect x="147" y="45" width="2" height="1" fill="#000080"/>
<rect x="151" y="45" width="1" height="1" fill="#ffff00"/>
<rect x="152" y="45" width="2" height="1" fill="#ff0000"/>
<rect x="154" y="45" width="1" height="1" fill="#ffffff"/>
<rect x="155" y="45" width="1" height="1" fill="#000000"/>
<rect x="156" y="45" width="2" height="1" fill="#c00000"/>
<rect x="158" y="45" width="1" height="1" fill="#000000"/>
<rect x="147" y="46" width="1" height="1" fill="#000080"/>
<rect x="150" y="46" width="1" height="1" fill="#ffff00"/>
<rect x="151" y="46" width="5" height="1" fill="#ffffff"/>
<rect x="156" y="46" width="3" height="1" fill="#000000"/>
<rect x="149" y="47" width="1" height="1" fill="#ffff00"/>
<rect x="150" y="47" width="1" height="1" fill="#ffffff"/>
<rect x="151" y="47" width="3" height="1" fill="#ff0000"/>
<rect x="154" y="47" width="1" height="1" fill="#000000"/>
<rect x="155" y="47" width="2" height="1" fill="#ffff00"/>
<rect x="157" y="47" width="1" height="1" fill="#000000"/>
<rect x="147" y="48" width="1" height="1" fill="#000000"/>
<rect x="148" y="48" width="5" height="1" fill="#ffffff"/>
<rect x="153" y="48" width="1" height="1" fill="#000000"/>
<rect x="154" y="48" width="2" height="1" fill="#ffff00"/>
<rect x="156" y="48" width="1" height="1" fill="#000000"/>
<rect x="147" y="49" width="1" height="1" fill="#000000"/>
<rect x="148" y="49" width="1" height="1" fill="#ffffff"/>
<rect x="149" y="49" width="4" height="1" fill="#ff0000"/>
<rect x="153" y="49" width="1" height="1" fill="#000000"/>
<rect x="154" y="49" width="1" height="1" fill="#ffff00"/>
<rect x="155" y="49" width="1" height="1" fill="#000000"/>
<rect x="147" y="50" width="1" height="1" fill="#000000"/>
<rect x="148" y="50" width="4" height="1" fill="#ffffff"/>
<rect x="152" y="50" width="1" height="1" fill="#000000"/>
<rect x="153" y="50" width="2" height="1" fill="#ffff00"/>
<rect x="155" y="50" width="1" height="1" fill="#000000"/>
<rect x="147" y="51" width="6" height="1" fill="#000000"/>
<rect x="153" y="51" width="1" height="1" fill="#ffff00"/>
<rect x="154" y="51" width="1" height="1" fill="#000000"/>
<rect x="152" y="52" width="2" height="1" fill="#000000"/>
<rect x="147" y="53" width="1" height="1" fill="#000000"/>
<rect x="149" y="53" width="1" height="1" fill="#000000"/>
<rect x="151" y="53" width="1" height="1" fill="#000000"/>
<rect x="153" y="53" width="1" height="1" fill="#000000"/>
<rect x="176" y="39" width="5" height="1" fill="#000000"/>
<rect x="175" y="40" width="6" height="1" fill="#000000"/>
<rect x="174" y="41" width="7" height="1" fill="#000000"/>
<rect x="174" y="42" width="3" height="1" fill="#000000"/>
<rect x="177" y="42" width="3" height="1" fill="#ffffff"/>
<rect x="180" y="42" width="2" height="1" fill="#000000"/>
<rect x="169" y="43" width="6" height="1" fill="#808000"/>
<rect x="175" y="43" width="2" height="1" fill="#000000"/>
<rect x="177" y="43" width="3" height="1" fill="#ffffff"/>
<rect x="180" y="43" width="1" height="1" fill="#000000"/>
<rect x="181" y="43" width="1" height="1" fill="#ffffff"/>
<rect x="182" y="43" width="1" height="1" fill="#000000"/>
<rect x="168" y="44" width="7" height="1" fill="#808000"/>
<rect x="175" y="44" width="2" height="1" fill="#000000"/>
<rect x="177" y="44" width="4" height="1" fill="#ffffff"/>
<rect x="181" y="44" width="2" height="1" fill="#000000"/>
<rect x="168" y="45" width="6" height="1" fill="#808000"/>
<rect x="174" y="45" width="3" height="1" fill="#000000"/>
<rect x="177" y="45" width="4" height="1" fill="#ffffff"/>
<rect x="181" y="45" width="1" height="1" fill="#000000"/>
<rect x="168" y="46" width="4" height="1" fill="#808000"/>
<rect x="172" y="46" width="2" height="1" fill="#ffffff"/>
<rect x="174" y="46" width="4" height="1" fill="#000000"/>
<rect x="178" y="46" width="3" height="1" fill="#ffffff"/>
<rect x="181" y="46" width="1" height="1" fill="#000000"/>
<rect x="168" y="47" width="3" height="1" fill="#808000"/>
<rect x="171" y="47" width="3" height="1" fill="#ffffff"/>
<rect x="174" y="47" width="2" height="1" fill="#000000"/>
<rect x="176" y="47" width="1" height="1" fill="#ffffff"/>
<rect x="177" y="47" width="2" height="1" fill="#000000"/>
<rect x="179" y="47" width="2" height="1" fill="#ffffff"/>
<rect x="181" y="47" width="1" height="1" fill="#000000"/>
<rect x="169" y="48" width="2" height="1" fill="#808000"/>
<rect x="171" y="48" width="1" height="1" fill="#000000"/>
<rect x="172" y="48" width="3" height="1" fill="#ffffff"/>
<rect x="175" y="48" width="1" height="1" fill="#000000"/>
<rect x="176" y="48" width="1" height="1" fill="#ff0000"/>
<rect x="177" y="48" width="3" height="1" fill="#000000"/>
<rect x="180" y="48" width="1" height="1" fill="#ff0000"/>
<rect x="181" y="48" width="1" height="1" fill="#000000"/>
<rect x="169" y="49" width="2" height="1" fill="#808000"/>
<rect x="171" y="49" width="4" height="1" fill="#ffffff"/>
<rect x="175" y="49" width="1" height="1" fill="#000000"/>
<rect x="170" y="50" width="1" height="1" fill="#000000"/>
<rect x="171" y="50" width="2" height="1" fill="#ffffff"/>
<rect x="173" y="50" width="3" height="1" fill="#000000"/>
<rect x="169" y="51" width="2" height="1" fill="#000000"/>
<rect x="171" y="51" width="2" height="1" fill="#ffffff"/>
<rect x="173" y="51" width="3" height="1" fill="#000000"/>
<rect x="168" y="52" width="1" height="1" fill="#000000"/>
<rect x="169" y="52" width="1" height="1" fill="#1e90ff"/>
<rect x="170" y="52" width="4" height="1" fill="#000000"/>
<rect x="174" y="52" width="1" height="1" fill="#1e90ff"/>
<rect x="175" y="52" width="1" height="1" fill="#000000"/>
<rect x="123" y="37" width="5" height="1" fill="#000000"/>
<rect x="121" y="38" width="2" height="1" fill="#000000"/>
<rect x="123" y="38" width="5" height="1" fill="#c0c0c0"/>
<rect x="128" y="38" width="2" height="1" fill="#000000"/>
<rect x="121" y="39" width="1" height="1" fill="#000000"/>
<rect x="122" y="39" width="1" height="1" fill="#c0c0c0"/>
<rect x="123" y="39" width="2" height="1" fill="#ffffff"/>
<rect x="125" y="39" width="4" height="1" fill="#c0c0c0"/>
<rect x="129" y="39" width="1" height="1" fill="#000000"/>
<rect x="120" y="40" width="1" height="1" fill="#000000"/>
<rect x="121" y="40" width="2" height="1" fill="#c0c0c0"/>
<rect x="123" y="40" width="2" height="1" fill="#ffffff"/>
<rect x="125" y="40" width="5" height="1" fill="#c0c0c0"/>
<rect x="130" y="40" width="1" height="1" fill="#000000"/>
<rect x="120" y="41" width="1" height="1" fill="#000000"/>
<rect x="121" y="41" width="9" height="1" fill="#c0c0c0"/>
<rect x="130" y="41" width="1" height="1" fill="#000000"/>
<rect x="120" y="42" width="1" height="1" fill="#000000"/>
<rect x="121" y="42" width="7" height="1" fill="#c0c0c0"/>
<rect x="128" y="42" width="1" height="1" fill="#ffffff"/>
<rect x="129" y="42" width="1" height="1" fill="#c0c0c0"/>
<rect x="130" y="42" width="1" height="1" fill="#000000"/>
<rect x="120" y="43" width="1" height="1" fill="#000000"/>
<rect x="121" y="43" width="7" height="1" fill="#c0c0c0"/>
<rect x="128" y="43" width="1" height="1" fill="#ffffff"/>
<rect x="129" y="43" width="1" height="1" fill="#c0c0c0"/>
<rect x="130" y="43" width="1" height="1" fill="#000000"/>
<rect x="120" y="44" width="1" height="1" fill="#000000"/>
<rect x="121" y="44" width="9" height="1" fill="#c0c0c0"/>
<rect x="130" y="44" width="1" height="1" fill="#000000"/>
<rect x="121" y="45" width="1" height="1" fill="#000000"/>
<rect x="122" y="45" width="4" height="1" fill="#c0c0c0"/>
<rect x="126" y="45" width="1" height="1" fill="#ffffff"/>
<rect x="127" y="45" width="2" height="1" fill="#c0c0c0"/>
<rect x="129" y="45" width="1" height="1" fill="#000000"/>
<rect x="119" y="46" width="1" height="1" fill="#000000"/>
<rect x="120" y="46" width="1" height="1" fill="#ffffff"/>
<rect x="121" y="46" width="2" height="1" fill="#000000"/>
<rect x="123" y="46" width="5" height="1" fill="#c0c0c0"/>
<rect x="128" y="46" width="2" height="1" fill="#000000"/>
<rect x="118" y="47" width="1" height="1" fill="#000000"/>
<rect x="119" y="47" width="1" height="1" fill="#ffffff"/>
<rect x="120" y="47" width="8" height="1" fill="#000000"/>
<rect x="130" y="47" width="4" height="1" fill="#000000"/>
<rect x="117" y="48" width="1" height="1" fill="#000000"/>
<rect x="118" y="48" width="1" height="1" fill="#ffffff"/>
<rect x="119" y="48" width="2" height="1" fill="#000000"/>
<rect x="129" y="48" width="2" height="1" fill="#000000"/>
<rect x="133" y="48" width="2" height="1" fill="#000000"/>
<rect x="116" y="49" width="1" height="1" fill="#000000"/>
<rect x="117" y="49" width="1" height="1" fill="#ffffff"/>
<rect x="118" y="49" width="2" height="1" fill="#000000"/>
<rect x="133" y="49" width="2" height="1" fill="#000000"/>
<rect x="116" y="50" width="3" height="1" fill="#000000"/>
<rect x="132" y="50" width="2" height="1" fill="#000000"/>
<rect x="117" y="51" width="1" height="1" fill="#000000"/>
<rect x="131" y="51" width="2" height="1" fill="#000000"/>
<rect x="131" y="52" width="2" height="1" fill="#000000"/>
<rect x="131" y="54" width="2" height="1" fill="#000000"/>
<rect x="311" y="37" width="5" height="1" fill="#808080"/>
<rect x="309" y="38" width="2" height="1" fill="#808080"/>
<rect x="316" y="38" width="2" height="1" fill="#808080"/>
<rect x="309" y="39" width="1" height="1" fill="#808080"/>
<rect x="317" y="39" width="1" height="1" fill="#808080"/>
<rect x="308" y="40" width="1" height="1" fill="#808080"/>
<rect x="318" y="40" width="1" height="1" fill="#808080"/>
<rect x="308" y="41" width="1" height="1" fill="#808080"/>
<rect x="318" y="41" width="1" height="1" fill="#808080"/>
<rect x="308" y="42" width="1" height="1" fill="#808080"/>
<rect x="318" y="42" width="1" height="1" fill="#808080"/>
<rect x="308" y="43" width="1" height="1" fill="#808080"/>
<rect x="318" y="43" width="1" height="1" fill="#808080"/>
<rect x="308" y="44" width="1" height="1" fill="#808080"/>
<rect x="318" y="44" width="1" height="1" fill="#808080"/>
<rect x="309" y="45" width="1" height="1" fill="#808080"/>
<rect x="317" y="45" width="1" height="1" fill="#808080"/>
<rect x="307" y="46" width="1" height="1" fill="#808080"/>
<rect x="309" y="46" width="2" height="1" fill="#808080"/>
<rect x="316" y="46" width="2" height="1" fill="#808080"/>
<rect x="306" y="47" width="1" height="1" fill="#808080"/>
<rect x="308" y="47" width="8" height="1" fill="#808080"/>
<rect x="318" y="47" width="4" height="1" fill="#808080"/>
<rect x="305" y="48" width="1" height="1" fill="#808080"/>
<rect x="307" y="48" width="2" height="1" fill="#808080"/>
<rect x="317" y="48" width="2" height="1" fill="#808080"/>
<rect x="321" y="48" width="2" height="1" fill="#808080"/>
<rect x="304" y="49" width="1" height="1" fill="#808080"/>
<rect x="306" y="49" width="2" height="1" fill="#808080"/>
<rect x="321" y="49" width="2" height="1" fill="#808080"/>
<rect x="304" y="50" width="3" height="1" fill="#808080"/>
<rect x="320" y="50" width="2" height="1" fill="#808080"/>
<rect x="305" y="51" width="1" height="1" fill="#808080"/>
<rect x="319" y="51" width="2" height="1" fill="#808080"/>
<rect x="319" y="52" width="2" height="1" fill="#808080"/>
<rect x="319" y="54" width="2" height="1" fill="#808080"/>
<rect x="7" y="6" width="13" height="1" fill="#ffffff"/>
<rect x="6" y="7" width="15" height="1" fill="#ffffff"/>
<rect x="6" y="8" width="5" height="1" fill="#ffffff"/>
<rect x="11" y="8" width="1" height="1" fill="#606060"/>
<rect x="12" y="8" width="2" height="1" fill="#000000"/>
<rect x="14" y="8" width="7" height="1" fill="#ffffff"/>
<rect x="6" y="9" width="3" height="1" fill="#ffffff"/>
<rect x="9" y="9" width="1" height="1" fill="#000000"/>
<rect x="10" y="9" width="1" height="1" fill="#ffffff"/>
<rect x="11" y="9" width="1" height="1" fill="#606060"/>
<rect x="12" y="9" width="2" height="1" fill="#000000"/>
<rect x="14" y="9" width="1" height="1" fill="#ffffff"/>
<rect x="15" y="9" width="1" height="1" fill="#606060"/>
<rect x="16" y="9" width="5" height="1" fill="#ffffff"/>
<rect x="6" y="10" width="3" height="1" fill="#ffffff"/>
<rect x="9" y="10" width="1" height="1" fill="#000000"/>
<rect x="10" y="10" width="1" height="1" fill="#ffffff"/>
<rect x="11" y="10" width="1" height="1" fill="#606060"/>
<rect x="12" y="10" width="1" height="1" fill="#ffffff"/>
<rect x="13" y="10" width="1" height="1" fill="#000000"/>
<rect x="14" y="10" width="1" height="1" fill="#ffffff"/>
<rect x="15" y="10" width="1" height="1" fill="#606060"/>
<rect x="16" y="10" width="5" height="1" fill="#ffffff"/>
<rect x="6" y="11" width="3" height="1" fill="#ffffff"/>
<rect x="9" y="11" width="1" height="1" fill="#000000"/>
<rect x="10" y="11" width="1" height="1" fill="#ffffff"/>
<rect x="11" y="11" width="3" height="1" fill="#606060"/>
<rect x="14" y="11" width="1" height="1" fill="#ffffff"/>
<rect x="15" y="11" width="1" height="1" fill="#606060"/>
<rect x="16" y="11" width="5" height="1" fill="#ffffff"/>
<rect x="6" y="12" width="3" height="1" fill="#ffffff"/>
<rect x="9" y="12" width="1" height="1" fill="#000000"/>
<rect x="10" y="12" width="5" height="1" fill="#ffffff"/>
<rect x="15" y="12" width="1" height="1" fill="#606060"/>
<rect x="16" y="12" width="5" height="1" fill="#ffffff"/>
<rect x="6" y="13" width="3" height="1" fill="#ffffff"/>
<rect x="9" y="13" width="1" height="1" fill="#000000"/>
<rect x="10" y="13" width="4" height="1" fill="#ffffff"/>
<rect x="14" y="13" width="4" height="1" fill="#000000"/>
<rect x="18" y="13" width="3" height="1" fill="#ffffff"/>
<rect x="6" y="14" width="3" height="1" fill="#ffffff"/>
<rect x="9" y="14" width="1" height="1" fill="#000000"/>
<rect x="10" y="14" width="11" height="1" fill="#ffffff"/>
<rect x="6" y="15" width="3" height="1" fill="#ffffff"/>
<rect x="9" y="15" width="1" height="1" fill="#000000"/>
<rect x="10" y="15" width="4" height="1" fill="#ffffff"/>
<rect x="14" y="15" width="4" height="1" fill="#000000"/>
<rect x="18" y="15" width="3" height="1" fill="#ffffff"/>
<rect x="6" y="16" width="3" height="1" fill="#ffffff"/>
<rect x="9" y="16" width="1" height="1" fill="#000000"/>
<rect x="10" y="16" width="4" height="1" fill="#ffffff"/>
<rect x="14" y="16" width="1" height="1" fill="#000000"/>
<rect x="15" y="16" width="1" height="1" fill="#ffffff"/>
<rect x="16" y="16" width="2" height="1" fill="#000000"/>
<rect x="18" y="16" width="3" height="1" fill="#ffffff"/>
<rect x="6" y="17" width="3" height="1" fill="#ffffff"/>
<rect x="9" y="17" width="1" height="1" fill="#000000"/>
<rect x="10" y="17" width="3" height="1" fill="#b0b0b0"/>
<rect x="13" y="17" width="1" height="1" fill="#ffffff"/>
<rect x="14" y="17" width="4" height="1" fill="#000000"/>
<rect x="18" y="17" width="3" height="1" fill="#ffffff"/>
<rect x="6" y="18" width="8" height="1" fill="#ffffff"/>
<rect x="14" y="18" width="4" height="1" fill="#000000"/>
<rect x="18" y="18" width="3" height="1" fill="#ffffff"/>
<rect x="6" y="19" width="15" height="1" fill="#ffffff"/>
<rect x="7" y="20" width="13" height="1" fill="#ffffff"/>
</svg>
</body></html>
